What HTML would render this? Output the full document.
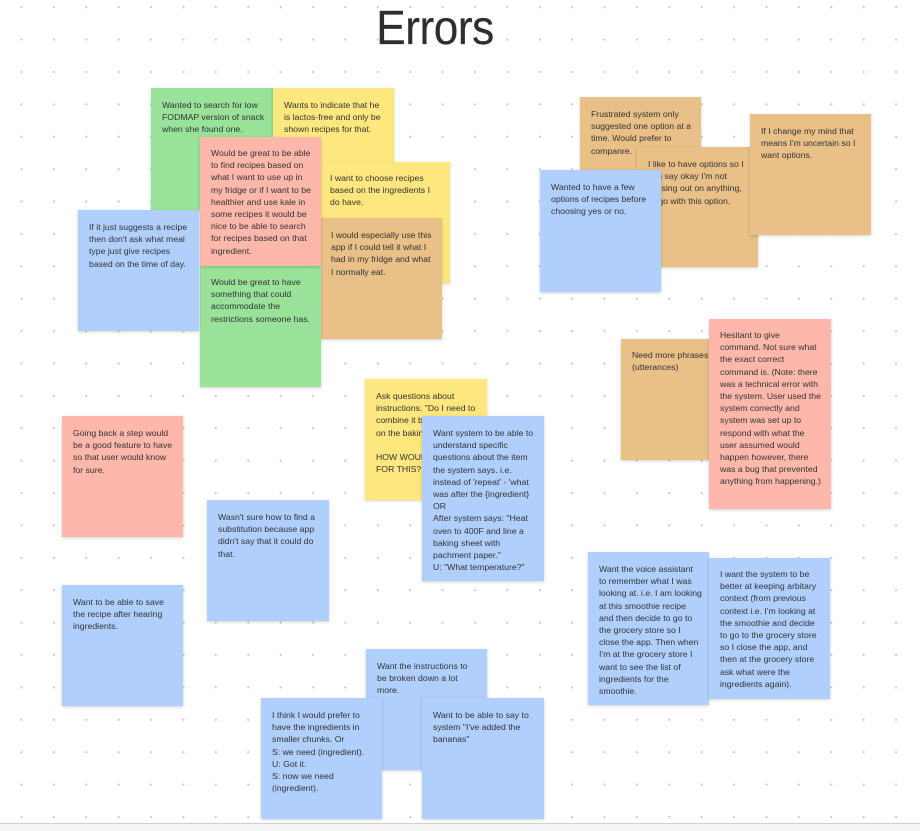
<!DOCTYPE html>
<html><head><meta charset="utf-8"><style>
html,body{margin:0;padding:0;}
body{width:920px;height:830px;position:relative;overflow:hidden;background-color:#fff;
background-image:radial-gradient(circle,#c8c8c8 0.9px,transparent 1.3px);
background-size:32.4px 32.4px;background-position:5.3px -9px;
font-family:"Liberation Sans",sans-serif;}
h1{position:absolute;left:0;width:870px;top:1px;margin:0;text-align:center;font-weight:400;font-size:48px;color:#2e2e2e;transform:scaleX(0.92);transform-origin:435px 0;letter-spacing:-0.5px;-webkit-text-stroke:0.2px #2e2e2e;}
.s{position:absolute;box-sizing:border-box;padding:11px 2px 0 11px;font-size:8.7px;line-height:12.2px;color:#333;box-shadow:0 1px 3px rgba(0,0,0,.18);white-space:nowrap;overflow:hidden;}
.g{background:#98e29a}.y{background:#fde77e}.p{background:#fdb8ab}.t{background:#e8c088}.b{background:#b0cffc}
.foot{position:absolute;left:0;top:823px;width:920px;height:7px;background:#f4f4f4;border-top:1px solid #cfcfcf;}
</style></head><body>
<h1>Errors</h1>
<div class="s g" style="left:151px;top:88px;width:122px;height:122px">Wanted to search for low<br>FODMAP version of snack<br>when she found one.</div>
<div class="s y" style="left:273px;top:88px;width:121px;height:122px">Wants to indicate that he<br>is lactos-free and only be<br>shown recipes for that.</div>
<div class="s y" style="left:321px;top:162px;width:129px;height:121px;padding-left:9px;padding-top:10px">I want to choose recipes<br>based on the ingredients I<br>do have.</div>
<div class="s t" style="left:321px;top:218px;width:121px;height:121px;padding-left:10px">I would especially use this<br>app if I could tell it what I<br>had in my fridge and what<br>I normally eat.</div>
<div class="s g" style="left:200px;top:266px;width:121px;height:121px;padding-top:10px">Would be great to have<br>something that could<br>accommodate the<br>restrictions someone has.</div>
<div class="s p" style="left:200px;top:137px;width:121px;height:129px;padding-top:10px">Would be great to be able<br>to find recipes based on<br>what I want to use up in<br>my fridge or if I want to be<br>healthier and use kale in<br>some recipes it would be<br>nice to be able to search<br>for recipes based on that<br>ingredient.</div>
<div class="s b" style="left:78px;top:210px;width:121px;height:121px">If it just suggests a recipe<br>then don't ask what meal<br>type just give recipes<br>based on the time of day.</div>

<div class="s t" style="left:580px;top:97px;width:121px;height:121px">Frustrated system only<br>suggested one option at a<br>time. Would prefer to<br>companre.</div>
<div class="s t" style="left:637px;top:147px;width:121px;height:120px">I like to have options so I<br>can say okay I'm not<br>missing out on anything,<br>I'll go with this option.</div>
<div class="s t" style="left:750px;top:114px;width:121px;height:121px">If I change my mind that<br>means I'm uncertain so I<br>want options.</div>
<div class="s b" style="left:540px;top:170px;width:121px;height:122px">Wanted to have a few<br>options of recipes before<br>choosing yes or no.</div>

<div class="s t" style="left:621px;top:339px;width:121px;height:121px;padding-top:10px">Need more phrases<br>(utterances)</div>
<div class="s p" style="left:709px;top:319px;width:122px;height:190px;padding-top:10px">Hesitant to give<br>command. Not sure what<br>the exact correct<br>command is. (Note: there<br>was a technical error with<br>the system. User used the<br>system correctly and<br>system was set up to<br>respond with what the<br>user assumed would<br>happen however, there<br>was a bug that prevented<br>anything from happening.)</div>

<div class="s y" style="left:365px;top:379px;width:122px;height:121px">Ask questions about<br>instructions. "Do I need to<br>combine it before I put it<br>on the baking sheet?"<br><br>HOW WOULD WE DESIGN<br>FOR THIS?</div>
<div class="s b" style="left:422px;top:416px;width:122px;height:165px">Want system to be able to<br>understand specific<br>questions about the item<br>the system says. i.e.<br>instead of 'repeat' - 'what<br>was after the {ingredient}<br>OR<br>After system says: "Heat<br>oven to 400F and line a<br>baking sheet with<br>pachment paper."<br>U: "What temperature?"</div>

<div class="s p" style="left:62px;top:416px;width:121px;height:121px">Going back a step would<br>be a good feature to have<br>so that user would know<br>for sure.</div>
<div class="s b" style="left:207px;top:500px;width:122px;height:121px">Wasn't sure how to find a<br>substitution because app<br>didn't say that it could do<br>that.</div>
<div class="s b" style="left:62px;top:585px;width:121px;height:121px">Want to be able to save<br>the recipe after hearing<br>ingredients.</div>

<div class="s b" style="left:588px;top:552px;width:121px;height:153px">Want the voice assistant<br>to remember what I was<br>looking at. i.e. I am looking<br>at this smoothie recipe<br>and then decide to go to<br>the grocery store so I<br>close the app. Then when<br>I'm at the grocery store I<br>want to see the list of<br>ingredients for the<br>smoothie.</div>
<div class="s b" style="left:709px;top:558px;width:121px;height:141px;padding-top:10px">I want the system to be<br>better at keeping arbitary<br>context (from previous<br>context i.e. I'm looking at<br>the smoothie and decide<br>to go to the grocery store<br>so I close the app, and<br>then at the grocery store<br>ask what were the<br>ingredients again).</div>

<div class="s b" style="left:366px;top:649px;width:121px;height:121px">Want the instructions to<br>be broken down a lot<br>more.</div>
<div class="s b" style="left:261px;top:698px;width:121px;height:121px">I think I would prefer to<br>have the ingredients in<br>smaller chunks. Or<br>S: we need (ingredient).<br>U: Got it.<br>S: now we need<br>(ingredient).</div>
<div class="s b" style="left:422px;top:698px;width:122px;height:121px">Want to be able to say to<br>system "I've added the<br>bananas"</div>
<div class="foot"></div>
</body></html>
